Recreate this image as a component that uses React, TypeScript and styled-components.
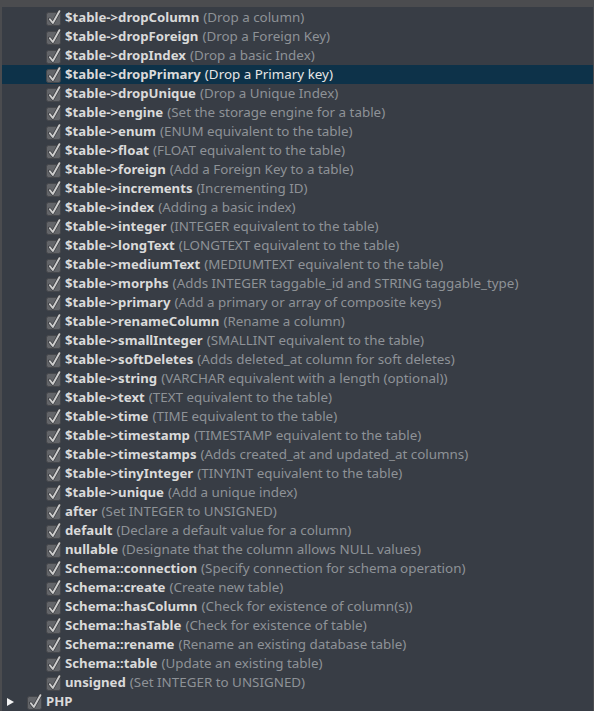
import { createGlobalStyle } from "styled-components";
import styled from "styled-components";

const GlobalStyle = createGlobalStyle`
  html, body {
    margin: 0;
    padding: 0;
    background: #383d45;
  }
  body {
    font-family: "Noto Sans", "DejaVu Sans", sans-serif;
  }
`;

const items: [string, string][] = [
  ["$table->dropColumn", "Drop a column"],
  ["$table->dropForeign", "Drop a Foreign Key"],
  ["$table->dropIndex", "Drop a basic Index"],
  ["$table->dropPrimary", "Drop a Primary key"],
  ["$table->dropUnique", "Drop a Unique Index"],
  ["$table->engine", "Set the storage engine for a table"],
  ["$table->enum", "ENUM equivalent to the table"],
  ["$table->float", "FLOAT equivalent to the table"],
  ["$table->foreign", "Add a Foreign Key to a table"],
  ["$table->increments", "Incrementing ID"],
  ["$table->index", "Adding a basic index"],
  ["$table->integer", "INTEGER equivalent to the table"],
  ["$table->longText", "LONGTEXT equivalent to the table"],
  ["$table->mediumText", "MEDIUMTEXT equivalent to the table"],
  ["$table->morphs", "Adds INTEGER taggable_id and STRING taggable_type"],
  ["$table->primary", "Add a primary or array of composite keys"],
  ["$table->renameColumn", "Rename a column"],
  ["$table->smallInteger", "SMALLINT equivalent to the table"],
  ["$table->softDeletes", "Adds deleted_at column for soft deletes"],
  ["$table->string", "VARCHAR equivalent with a length (optional)"],
  ["$table->text", "TEXT equivalent to the table"],
  ["$table->time", "TIME equivalent to the table"],
  ["$table->timestamp", "TIMESTAMP equivalent to the table"],
  ["$table->timestamps", "Adds created_at and updated_at columns"],
  ["$table->tinyInteger", "TINYINT equivalent to the table"],
  ["$table->unique", "Add a unique index"],
  ["after", "Set INTEGER to UNSIGNED"],
  ["default", "Declare a default value for a column"],
  ["nullable", "Designate that the column allows NULL values"],
  ["Schema::connection", "Specify connection for schema operation"],
  ["Schema::create", "Create new table"],
  ["Schema::hasColumn", "Check for existence of column(s)"],
  ["Schema::hasTable", "Check for existence of table"],
  ["Schema::rename", "Rename an existing database table"],
  ["Schema::table", "Update an existing table"],
  ["unsigned", "Set INTEGER to UNSIGNED"],
];

const SELECTED = 3;

const Frame = styled.div`
  width: 594px;
  height: 711px;
  box-sizing: border-box;
  background: #383d45;
  border-left: 2px solid #4b4c4f;
  border-right: 1px solid #4b4c4f;
  overflow: hidden;
`;

const TopBar = styled.div`
  height: 7px;
  background: #4b4c4f;
  margin: 0 -1px 1px -2px;
`;

const Row = styled.div<{ $indent: number; $selected?: boolean }>`
  height: 19px;
  display: flex;
  align-items: center;
  padding-left: ${(p) => p.$indent}px;
  background: ${(p) => (p.$selected ? "#0d3249" : "transparent")};
  white-space: nowrap;
  line-height: 19px;
`;

const Name = styled.span`
  color: #dadada;
  font-weight: bold;
  font-size: 13.2px;
  margin-left: 3px;
`;

const Desc = styled.span<{ $selected?: boolean }>`
  color: ${(p) => (p.$selected ? "#e6e6e6" : "#8e9297")};
  font-size: 13.4px;
  margin-left: 4px;
`;

const Arrow = styled.span`
  width: 0;
  height: 0;
  border-top: 4.5px solid transparent;
  border-bottom: 4.5px solid transparent;
  border-left: 7px solid #f2f2f2;
  margin-right: 13px;
`;

function CheckBox() {
  return (
    <svg width="16" height="18" viewBox="0 0 16 18" style={{ flex: "none" }}>
      <rect x="0.5" y="3.5" width="14" height="13" rx="2" fill="#636569" stroke="#45474b" />
      <path
        d="M3.8 10.2 L6.8 14 L13.4 2.2"
        fill="none"
        stroke="#3a3c40"
        strokeWidth="3.4"
        strokeLinecap="round"
        strokeLinejoin="round"
      />
      <path
        d="M3.8 10.2 L6.8 14 L13.4 2.2"
        fill="none"
        stroke="#cdcdcd"
        strokeWidth="1.9"
        strokeLinecap="round"
        strokeLinejoin="round"
      />
    </svg>
  );
}

export default function App() {
  return (
    <>
      <GlobalStyle />
      <Frame>
        <TopBar />
        {items.map(([name, desc], i) => (
          <Row key={name + i} $indent={44} $selected={i === SELECTED}>
            <CheckBox />
            <Name>{name}</Name>
            <Desc $selected={i === SELECTED}>({desc})</Desc>
          </Row>
        ))}
        <Row $indent={5}>
          <Arrow />
          <CheckBox />
          <Name>PHP</Name>
        </Row>
      </Frame>
    </>
  );
}
